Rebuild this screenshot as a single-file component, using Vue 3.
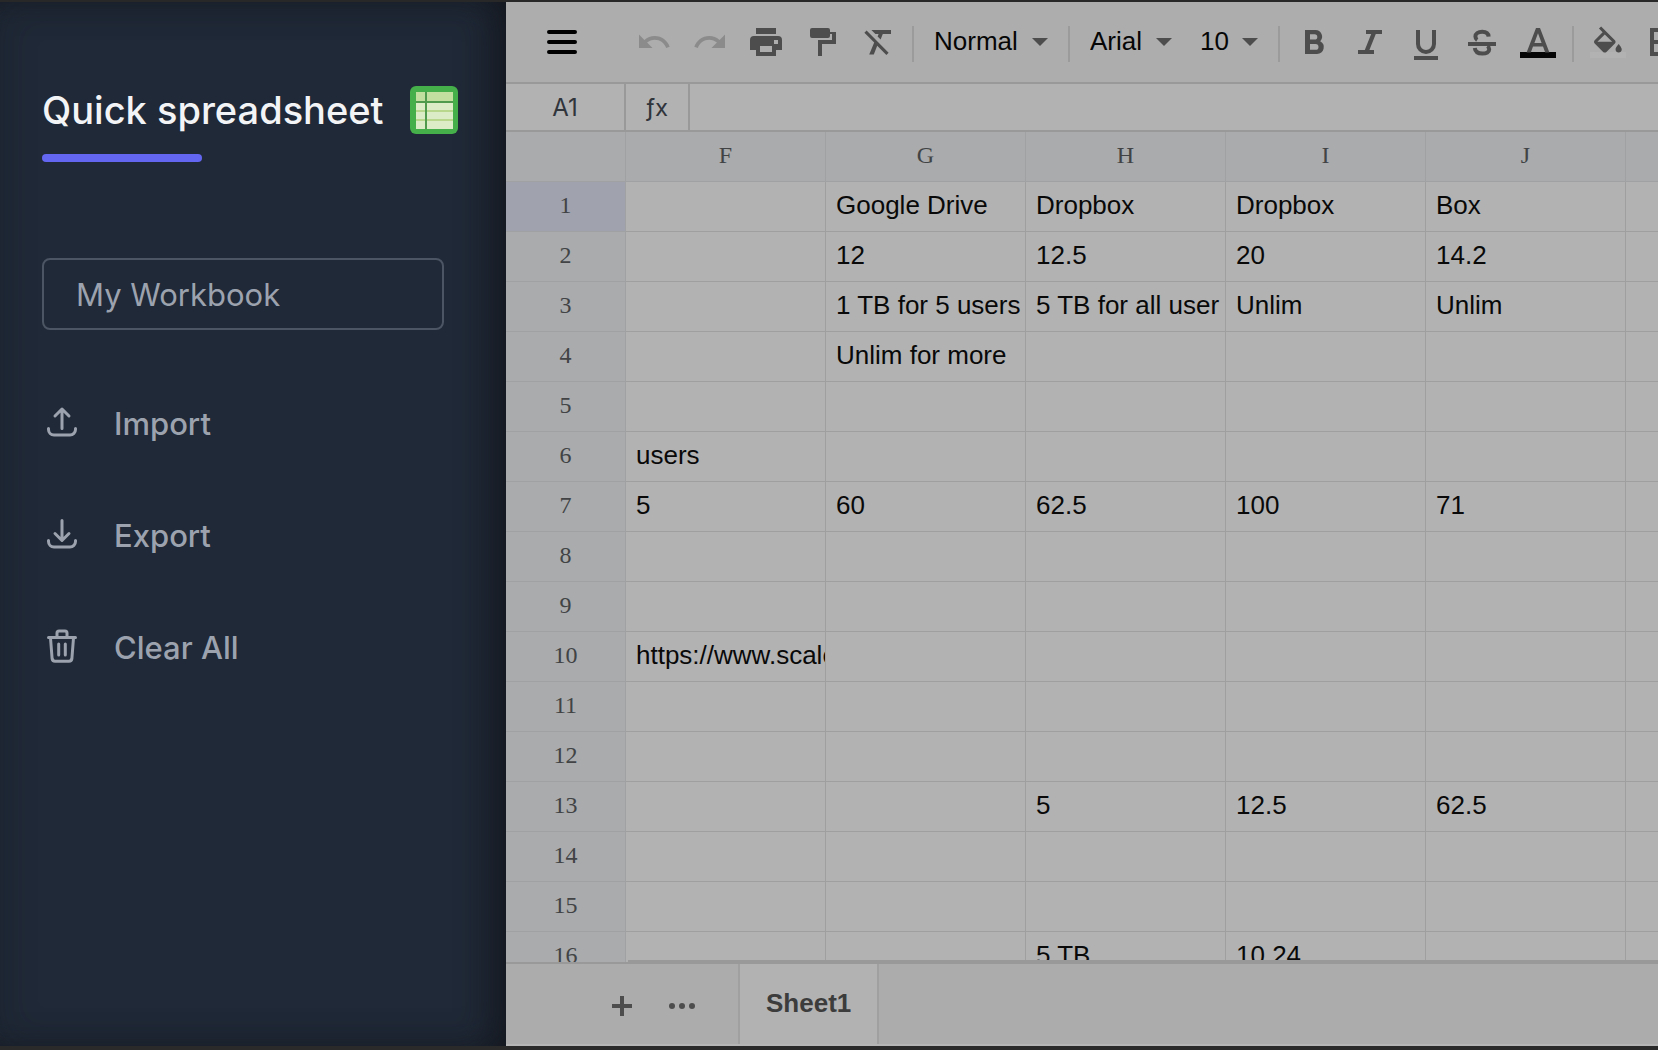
<script setup>
import { ref } from 'vue'

const workbook = ref('My Workbook')
const textStyle = ref('Normal')
const fontName = ref('Arial')
const fontSize = ref('10')

const columns = ['F', 'G', 'H', 'I', 'J', '']

const cells = {
  1: { G: 'Google Drive', H: 'Dropbox', I: 'Dropbox', J: 'Box' },
  2: { G: '12', H: '12.5', I: '20', J: '14.2' },
  3: { G: '1 TB for 5 users', H: '5 TB for all user', I: 'Unlim', J: 'Unlim' },
  4: { G: 'Unlim for more' },
  6: { F: 'users' },
  7: { F: '5', G: '60', H: '62.5', I: '100', J: '71' },
  10: { F: 'https://www.scale' },
  13: { H: '5', I: '12.5', J: '62.5' },
  16: { H: '5 TB', I: '10.24' },
}

const cellText = (row, col) => (cells[row] && cells[row][col]) || ''
</script>

<template>
  <div class="window">
    <aside class="sidebar">
      <header class="brand">
        <h1>Quick spreadsheet</h1>
        <svg class="logo" viewBox="0 0 48 48" aria-hidden="true">
          <rect x="0" y="0" width="48" height="48" rx="6" fill="#45b04a" />
          <rect x="6" y="6" width="37" height="37" fill="#dcecc6" />
          <rect x="6" y="6" width="37" height="9" fill="#c2dfa0" />
          <path d="M6 25h37M6 34h37" stroke="#b9d88e" stroke-width="2" />
          <path d="M6 16h37M16 6v37" stroke="#4f9a4c" stroke-width="2" />
        </svg>
      </header>
      <div class="accent"></div>

      <input v-model="workbook" class="name" type="text" aria-label="Workbook name" />

      <nav class="menu">
        <button type="button">
          <svg viewBox="0 0 36 36" aria-hidden="true">
            <path d="M18 4v19.500M11 11l7-7 7 7M4.500 23.500v1a5.500 5.500 0 0 0 5.500 5.500h16a5.500 5.500 0 0 0 5.500-5.500v-1" />
          </svg>
          <span>Import</span>
        </button>
        <button type="button">
          <svg viewBox="0 0 36 36" aria-hidden="true">
            <path d="M18 3.500v19.500M11 16.500l7 7 7-7M4.500 23.500v1a5.500 5.500 0 0 0 5.500 5.500h16a5.500 5.500 0 0 0 5.500-5.500v-1" />
          </svg>
          <span>Export</span>
        </button>
        <button type="button">
          <svg viewBox="0 0 36 36" aria-hidden="true">
            <path d="M4.500 8.500h27M13 8V4a2 2 0 0 1 2-2h6a2 2 0 0 1 2 2v4M6.500 9l1.600 20.500a3 3 0 0 0 3 2.700h13.800a3 3 0 0 0 3-2.700L29.500 9M14.700 15v11M21.300 15v11" />
          </svg>
          <span>Clear All</span>
        </button>
      </nav>
    </aside>

    <main class="workspace">
      <div class="toolbar">
        <button type="button" class="burger" aria-label="Menu">
          <svg viewBox="0 0 36 36"><path d="M5 8h26M5 18h26M5 28h26" /></svg>
        </button>
        <button type="button" class="tool faded" aria-label="Undo">
          <svg viewBox="0 0 24 24"><path d="M12.500 8c-2.650 0-5.050.990-6.900 2.600L2 7v9h9l-3.620-3.620c1.390-1.160 3.160-1.880 5.120-1.880 3.540 0 6.550 2.310 7.600 5.500l2.370-.780C21.080 11.030 17.150 8 12.500 8z" /></svg>
        </button>
        <button type="button" class="tool faded" aria-label="Redo">
          <svg viewBox="0 0 24 24"><path d="M18.400 10.600C16.550 8.990 14.150 8 11.500 8c-4.650 0-8.580 3.030-9.960 7.220L3.900 16c1.050-3.190 4.050-5.500 7.600-5.500 1.950 0 3.730.720 5.120 1.880L13 16h9V7l-3.600 3.600z" /></svg>
        </button>
        <button type="button" class="tool" aria-label="Print">
          <svg viewBox="0 0 18 18"><path fill-rule="evenodd" d="M4 2h10v3H4zM3 6h12a2 2 0 0 1 2 2v5h-3v3H4v-3H1V8a2 2 0 0 1 2-2zM6 11v3h6v-3zM13 8v2h2V8z" /></svg>
        </button>
        <button type="button" class="tool" aria-label="Paint format">
          <svg viewBox="0 0 18 18"><path d="M4 2h8a1 1 0 0 1 1 1v1h3v6H9v6H7V8h7V5h-1v1a1 1 0 0 1-1 1H4a1 1 0 0 1-1-1V3a1 1 0 0 1 1-1z" /></svg>
        </button>
        <button type="button" class="tool" aria-label="Clear format">
          <svg viewBox="0 0 18 18"><path d="M5.700 3l2 2h1.600l-.5 1.200 1.500 1.500L11.400 5h4.100V3zM3.300 3.300L2.200 4.400l4.900 4.900L4.600 15.300h2.300l1.700-4.400 4.600 4.600 1.100-1.100z" /></svg>
        </button>
        <span class="divider"></span>
        <span class="picker wide">
          <select v-model="textStyle" aria-label="Text style"><option>Normal</option></select>
        </span>
        <span class="divider"></span>
        <span class="picker mid">
          <select v-model="fontName" aria-label="Font"><option>Arial</option></select>
        </span>
        <span class="picker slim">
          <select v-model="fontSize" aria-label="Font size"><option>10</option></select>
        </span>
        <span class="divider"></span>
        <button type="button" class="tool" aria-label="Bold">
          <svg viewBox="0 0 18 18"><path fill-rule="evenodd" d="M4.500 3h5.200a3.300 3.300 0 0 1 2.400 5.600A3.400 3.400 0 0 1 10.500 15h-6zM7 5.100v2.700h2.300a1.350 1.350 0 0 0 0-2.700zM7 10v2.900h2.800a1.450 1.450 0 0 0 0-2.900z" /></svg>
        </button>
        <button type="button" class="tool" aria-label="Italic">
          <svg viewBox="0 0 18 18"><path d="M7 3v2h2.600l-3.200 8H3v2h8v-2H8.700l3.200-8H15V3z" /></svg>
        </button>
        <button type="button" class="tool" aria-label="Underline">
          <svg viewBox="0 0 18 18"><path d="M3 16h12v2H3z" /><path class="line" d="M5 3v7a4 4 0 0 0 8 0V3" /></svg>
        </button>
        <button type="button" class="tool" aria-label="Strikethrough">
          <svg viewBox="0 0 18 18"><path d="M2 9h14v2H2z" /><path class="line" d="M12.300 6.300C12.200 4.800 11 3.900 9.100 3.900 7 3.900 5.700 4.900 5.700 6.300c0 .7.300 1.300.9 1.700M11.700 11c.6.400.9.900.9 1.600 0 1.400-1.400 2.200-3.400 2.200-2.300 0-3.600-1-3.800-2.800" /></svg>
        </button>
        <button type="button" class="tool" aria-label="Text colour">
          <svg viewBox="0 0 18 18"><path fill="#060606" d="M0 14h18v3H0z" /><path fill-rule="evenodd" d="M8 2h2l4.700 12.300h-2.100l-1.100-3h-5l-1.100 3H3.300zM9 4.600L7.200 9.500h3.600z" /></svg>
        </button>
        <span class="divider"></span>
        <button type="button" class="tool" aria-label="Fill colour">
          <svg viewBox="0 0 18 18"><path fill="#b2b2b2" d="M0 14h18v3H0z" /><path transform="translate(-.3 1.200) scale(.77)" d="M16.560 8.940L7.620 0 6.210 1.410l2.380 2.380-5.150 5.150c-.590.590-.590 1.540 0 2.120l5.500 5.500c.290.290.680.440 1.060.440s.770-.150 1.060-.440l5.500-5.500c.590-.580.590-1.530 0-2.120zM5.210 10L10 5.210 14.790 10H5.210zM19 11.500s-2 2.170-2 3.500c0 1.100.9 2 2 2s2-.9 2-2c0-1.330-2-3.500-2-3.500z" /></svg>
        </button>
        <button type="button" class="tool" aria-label="Borders">
          <svg viewBox="0 0 18 18"><path fill-rule="evenodd" d="M2 2h14v14H2zM4 4v4h4V4zM10 4v4h4V4zM4 10v4h4v-4zM10 10v4h4v-4z" /></svg>
        </button>
      </div>

      <div class="formula">
        <span class="address">A1</span>
        <span class="fx">ƒx</span>
        <input type="text" aria-label="Formula" />
      </div>

      <div class="grid">
        <table>
          <colgroup>
            <col class="c-index" />
            <col v-for="n in 5" :key="n" class="c-data" />
            <col />
          </colgroup>
          <thead>
            <tr>
              <th></th>
              <th v-for="c in columns" :key="c" scope="col">{{ c }}</th>
            </tr>
          </thead>
          <tbody>
            <tr v-for="r in 16" :key="r">
              <th scope="row" :class="{ active: r === 1 }">{{ r }}</th>
              <td v-for="c in columns" :key="c">{{ cellText(r, c) }}</td>
            </tr>
          </tbody>
        </table>
        <div class="track"></div>
      </div>

      <footer class="tabs">
        <button type="button" class="tool" aria-label="Add sheet">
          <svg viewBox="0 0 36 36"><path d="M16 8h4v8h8v4h-8v8h-4v-8H8v-4h8z" /></svg>
        </button>
        <button type="button" class="tool" aria-label="All sheets">
          <svg viewBox="0 0 36 36"><circle cx="8" cy="18" r="3" /><circle cx="18" cy="18" r="3" /><circle cx="28" cy="18" r="3" /></svg>
        </button>
        <button type="button" class="tab">Sheet1</button>
      </footer>
    </main>
  </div>
</template>

<style>
body {
  margin: 0;
  background: #2a2a2a;
}
</style>

<style scoped>
* {
  box-sizing: border-box;
}

button,
input,
select {
  margin: 0;
  padding: 0;
  border: 0;
  background: none;
  color: inherit;
  font: inherit;
}

.window {
  display: flex;
  height: 100vh;
  border-top: 2px solid #282828;
  border-bottom: 4px solid #2a2a2a;
}

.sidebar {
  flex: 0 0 506px;
  padding: 80px 48px 0 42px;
  background: #202937;
  box-shadow: inset -20px 0 36px -10px rgba(16, 18, 22, 0.75), inset 0 0 36px rgba(20, 26, 34, 0.25);
  color: #9ca3af;
  font-family: Inter, "Liberation Sans", sans-serif;
}

.brand {
  display: flex;
  align-items: center;
  justify-content: space-between;
  height: 56px;
}

.brand h1 {
  margin: 0;
  color: #f3f4f6;
  font-size: 38px;
  font-weight: 500;
  line-height: 56px;
  white-space: nowrap;
}

.logo {
  width: 48px;
  height: 48px;
}

.accent {
  width: 160px;
  height: 8px;
  margin-top: 16px;
  border-radius: 4px;
  background: #6366f1;
}

.name {
  display: block;
  width: 402px;
  height: 72px;
  margin-top: 96px;
  padding: 0 32px;
  border: 2px solid #4b5563;
  border-radius: 8px;
  font-size: 31px;
}

.menu {
  display: flex;
  flex-direction: column;
  gap: 56px;
  margin-top: 65px;
}

.menu button {
  display: flex;
  align-items: center;
  gap: 34px;
  height: 56px;
  padding-left: 2px;
  font-size: 31px;
  font-weight: 500;
}

.menu svg {
  width: 36px;
  height: 36px;
  fill: none;
  stroke: currentColor;
  stroke-width: 3;
  stroke-linecap: round;
  stroke-linejoin: round;
}

.workspace {
  display: flex;
  flex: 1;
  flex-direction: column;
  min-width: 0;
  overflow: hidden;
  background: #b2b2b2;
  font-family: "Liberation Sans", Arial, sans-serif;
  font-size: 26px;
}

.toolbar {
  display: flex;
  flex: none;
  align-items: center;
  height: 82px;
  overflow: hidden;
  border-bottom: 2px solid #999;
  background: #adadad;
  color: #060606;
}

.burger {
  flex: none;
  height: 36px;
  margin: 0 46px 0 38px;
}

.burger svg {
  display: block;
  width: 36px;
  height: 36px;
  stroke: #000;
  stroke-width: 4;
  stroke-linecap: round;
}

.tool {
  display: flex;
  flex: 0 0 56px;
  align-items: center;
  justify-content: center;
  height: 56px;
  color: #4d4d4d;
}

.tool svg {
  width: 36px;
  height: 36px;
  fill: currentColor;
}

.tool .line {
  fill: none;
  stroke: currentColor;
  stroke-width: 2;
}

.faded {
  color: #8b8b8b;
}

.divider {
  flex: none;
  width: 2px;
  height: 36px;
  margin: 4px 6px 0;
  background: #9b9b9b;
}

.picker {
  position: relative;
  flex: none;
}

.picker::after {
  content: "";
  position: absolute;
  top: 50%;
  right: 14px;
  border: 8px solid transparent;
  border-top-color: #4d4d4d;
  border-bottom: 0;
  transform: translateY(-50%);
  pointer-events: none;
}

.picker select {
  display: block;
  width: 100%;
  height: 56px;
  padding: 0 0 2px 14px;
  appearance: none;
}

.wide {
  width: 142px;
}

.mid {
  width: 110px;
}

.slim {
  width: 86px;
}

.formula {
  display: flex;
  flex: none;
  height: 48px;
  border-bottom: 2px solid #999;
  color: #30343b;
  font-family: Inter, "Liberation Sans", sans-serif;
  font-size: 24px;
  line-height: 48px;
  text-align: center;
}

.address {
  flex: 0 0 120px;
  border-right: 2px solid #999;
}

.fx {
  flex: 0 0 64px;
  border-right: 2px solid #999;
}

.formula input {
  flex: 1;
  min-width: 0;
}

.grid {
  position: relative;
  flex: 1;
  min-height: 0;
  overflow: hidden;
}

table {
  width: 100%;
  border-spacing: 0;
  table-layout: fixed;
}

.c-index {
  width: 120px;
}

.c-data {
  width: 200px;
}

th,
td {
  height: 50px;
  padding: 0 0 4px;
  overflow: hidden;
  border-right: 1px solid #9f9f9f;
  border-bottom: 1px solid #9f9f9f;
  line-height: 44px;
  white-space: nowrap;
}

th:last-child,
td:last-child {
  border-right: 0;
}

th {
  border-color: #a0a1a2;
  background: #a9abac;
  color: #414345;
  font-family: "Liberation Serif", "Times New Roman", serif;
  font-size: 24px;
  font-weight: 400;
}

th.active {
  background: #a0a3ae;
}

td {
  padding-left: 10px;
  color: #090909;
}

.track {
  position: absolute;
  right: 0;
  bottom: 0;
  left: 122px;
  height: 2px;
  background: #999;
}

.tabs {
  display: flex;
  flex: none;
  align-items: center;
  gap: 4px;
  height: 84px;
  padding-left: 88px;
  border-top: 2px solid #999;
  border-bottom: 2px solid #b6b6b6;
  background: #acacac;
}

.tabs .tool {
  margin-top: 4px;
}

.tab {
  align-self: stretch;
  margin-left: 24px;
  padding: 0 26px 2px;
  border: 2px solid #a0a0a0;
  border-width: 0 2px;
  background: #b2b2b2;
  color: #3c3c3c;
  font-weight: 700;
}
</style>
